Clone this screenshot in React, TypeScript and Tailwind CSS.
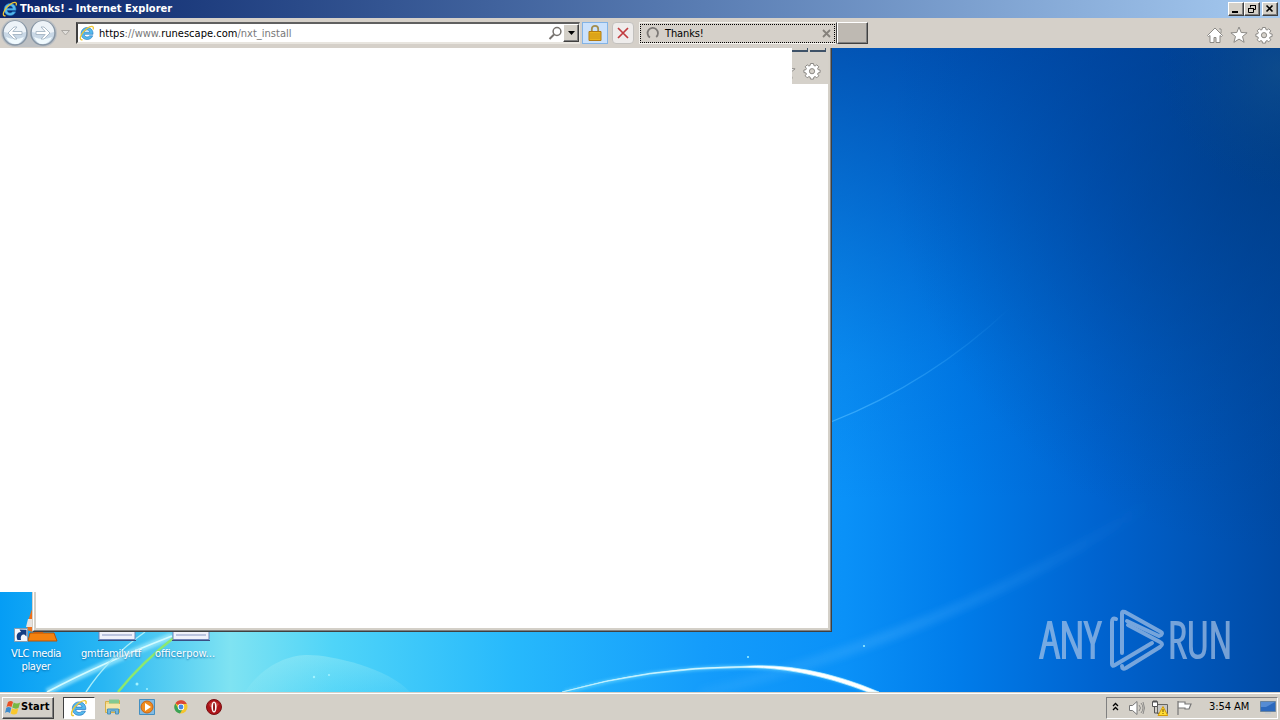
import React from "react";

const ui = "font-['DejaVu_Sans_Condensed','DejaVu_Sans',sans-serif] [font-stretch:condensed]";

function IE({ className = "" }: { className?: string }) {
  return (
    <svg viewBox="0 0 16 16" className={className}>
      <path d="M14 9.300H5.200c.2 1.700 1.300 2.700 2.900 2.700 1.200 0 2-.5 2.400-1.200h3.200c-.8 2.400-2.900 3.700-5.600 3.700-3.500 0-6-2.500-6-5.900s2.500-6 6-6c3.700 0 6.200 2.700 5.900 6.700zM5.300 7.200h5.400c-.2-1.500-1.200-2.300-2.600-2.300S5.600 5.700 5.300 7.200z" fill="#55b9ec" stroke="#1b72c0" strokeWidth=".6" />
      <path d="M3.500 14.600C1.200 15.500.5 13 2.400 9.700 4.700 5.400 10.500 1 13.400 1.500c1.200.4 1.200 1.500.6 2.900" fill="none" stroke="#efc634" strokeWidth="1.300" />
    </svg>
  );
}

function Gear() {
  return (
    <svg viewBox="0 0 18 18" className="size-[18px] shrink-0">
      <g stroke="#8b8985" fill="#fff" strokeWidth="1">
        <path d="M7.500 1.500h3l.4 2 1.200.5 1.700-1.200 2 2-1.200 1.700.5 1.200 2 .3v2.500l-2 .4-.5 1.200 1.200 1.700-2 2-1.700-1.200-1.200.5-.4 2h-3l-.4-2-1.200-.5-1.700 1.200-2-2 1.200-1.700-.5-1.200-2-.4V8l2-.3.500-1.200-1.200-1.700 2-2L5.900 4l1.200-.5z" />
        <circle cx="9" cy="9.200" r="2.600" fill="#d5d1ca" />
      </g>
    </svg>
  );
}

function Star() {
  return (
    <svg viewBox="0 0 18 18" className="size-[18px] shrink-0">
      <path d="M9 1l2.200 5.500 5.900.3-4.600 3.700 1.600 5.800L9 13.100l-5.100 3.200 1.600-5.800L.9 6.800l5.900-.3z" fill="#fff" stroke="#8b8985" />
    </svg>
  );
}

function Wallpaper() {
  return (
    <svg viewBox="0 48 1280 644" preserveAspectRatio="none" className="absolute inset-0 h-full w-full">
      <defs>
        <linearGradient id="sky" x1="0" x2="1280" y1="0" y2="0" gradientUnits="userSpaceOnUse">
          <stop offset="0" stopColor="#059df5" />
          <stop offset=".08" stopColor="#28b6f3" />
          <stop offset=".18" stopColor="#7fe3f2" />
          <stop offset=".26" stopColor="#4fd4f8" />
          <stop offset=".4" stopColor="#27b9fc" />
          <stop offset=".55" stopColor="#149cfb" />
          <stop offset=".66" stopColor="#0a91f8" />
          <stop offset=".75" stopColor="#007cea" />
          <stop offset=".86" stopColor="#0063cf" />
          <stop offset="1" stopColor="#004aa5" />
        </linearGradient>
        <linearGradient id="shade" x1="0" x2="0" y1="48" y2="500" gradientUnits="userSpaceOnUse">
          <stop offset="0" stopColor="#0042a0" stopOpacity=".76" />
          <stop offset=".35" stopColor="#0047a8" stopOpacity=".46" />
          <stop offset=".7" stopColor="#0050b0" stopOpacity=".14" />
          <stop offset="1" stopColor="#0050b0" stopOpacity="0" />
        </linearGradient>
        <radialGradient id="dusk" cx="1290" cy="150" r="400" gradientUnits="userSpaceOnUse">
          <stop offset="0" stopColor="#003a7c" stopOpacity=".7" />
          <stop offset=".5" stopColor="#003c84" stopOpacity=".34" />
          <stop offset="1" stopColor="#00448f" stopOpacity="0" />
        </radialGradient>
        <radialGradient id="corner" cx="1280" cy="70" r="120" gradientUnits="userSpaceOnUse">
          <stop offset="0" stopColor="#1c5787" stopOpacity=".45" />
          <stop offset="1" stopColor="#08488a" stopOpacity="0" />
        </radialGradient>
        <linearGradient id="beam" x1="700" x2="1150" y1="0" y2="0" gradientUnits="userSpaceOnUse">
          <stop offset="0" stopColor="#6cc6ff" stopOpacity=".1" />
          <stop offset=".4" stopColor="#57b6ff" stopOpacity=".27" />
          <stop offset="1" stopColor="#57b6ff" stopOpacity="0" />
        </linearGradient>
        <linearGradient id="thin" x1="832" x2="1010" y1="0" y2="0" gradientUnits="userSpaceOnUse">
          <stop offset="0" stopColor="#46b4ff" stopOpacity=".8" />
          <stop offset="1" stopColor="#46b4ff" stopOpacity="0" />
        </linearGradient>
        <linearGradient id="dome" x1="0" x2="0" y1="655" y2="692" gradientUnits="userSpaceOnUse">
          <stop offset="0" stopColor="#b8f4f5" stopOpacity=".34" />
          <stop offset="1" stopColor="#a0edf5" stopOpacity=".1" />
        </linearGradient>
        <filter id="soft" x="-20%" y="-50%" width="140%" height="200%"><feGaussianBlur stdDeviation="1.600" /></filter>
        <filter id="softer" x="-20%" y="-50%" width="140%" height="200%"><feGaussianBlur stdDeviation="3" /></filter>
      </defs>
      <path d="M0 48h1280v644H0z" fill="url(#sky)" />
      <path d="M0 48h1280v452H0z" fill="url(#shade)" />
      <path d="M880 48h400v510H880z" fill="url(#dusk)" />
      <path d="M1100 48h180v190h-180z" fill="url(#corner)" />
      <path d="M832 421.500Q930 383 1010 308" fill="none" stroke="url(#thin)" strokeWidth="1.200" />
      <path d="M700 694Q960 630 1150 503" fill="none" stroke="url(#beam)" strokeWidth="11" filter="url(#softer)" />
      <path d="M245 692C265 662 292 655 308 655c24 0 80 13 102 37z" fill="url(#dome)" />
      <path d="M47 692Q100 665 172 636" fill="none" stroke="#b9f4ff" strokeWidth="7" opacity=".6" filter="url(#soft)" />
      <path d="M47 692Q100 664 172 636" fill="none" stroke="#d2fbff" strokeWidth="1.800" />
      <path d="M86 692Q108 658 145 632" fill="none" stroke="#a7edfa" strokeWidth="1.500" />
      <path d="M118 692Q142 662 176 636" fill="none" stroke="#8ce86f" strokeWidth="2.500" />
      <path d="M565 692Q650 668 740 667 810 666 872 692" fill="none" stroke="#75dcff" strokeWidth="4" opacity=".55" filter="url(#soft)" />
      <path d="M562 692Q650 668 740 667.500 800 666 868 692l11 0Q806 661 740 666.500 650 667 562 692z" fill="#fff" stroke="#c4f3ff" strokeWidth=".7" />
      <g fill="#a2f2ff"><circle cx="314" cy="677" r="1.200" /><circle cx="329" cy="675" r="1" /><circle cx="748" cy="657" r="1" /><circle cx="864" cy="646" r="1" /><circle cx="137" cy="684" r="1.500" /><circle cx="147" cy="689" r="1" /></g>
    </svg>
  );
}

function Watermark() {
  return (
    <svg viewBox="0 -12 216 90" className="absolute left-[1037px] top-[548px] h-[90px] w-[216px] opacity-65">
      <g fill="#b5cce9" stroke="#b5cce9" strokeWidth="1.900" fontFamily="'Open Sans',sans-serif" fontWeight="300" fontSize="50">
        <text x="3" y="50" textLength="61" lengthAdjust="spacingAndGlyphs">ANY</text>
        <text x="131" y="50" textLength="64" lengthAdjust="spacingAndGlyphs">RUN</text>
      </g>
      <g fill="none" stroke="#b5cce9" strokeWidth="4" strokeLinejoin="round" strokeLinecap="round">
        <path d="M79 11q-4-2-4 3v42q0 3 3 1l37-22" />
        <path d="M85 45V5q0-2 3-1l36 20q2 1 0 3l-2 1-32-15" />
        <path d="M85 58q0 4 4 2l34-21q4-3 0-5L91 17" />
      </g>
    </svg>
  );
}

function WinButton({ children }: { children: React.ReactNode }) {
  return (
    <button className="flex h-[14px] w-4 items-center justify-center border border-t-white border-l-white border-r-[#404040] border-b-[#404040] bg-[#d4d0c8] shadow-[inset_-1px_-1px_0_#808080]">
      <svg viewBox="0 0 12 10" className="h-[10px] w-3" fill="none" stroke="#000">{children}</svg>
    </button>
  );
}

function TitleBar() {
  return (
    <header className="flex h-[18px] shrink-0 items-center bg-linear-to-r from-[#0a246a] to-[#a6caf0] pl-0.5 pr-[2px]">
      <IE className="size-4" />
      <span className="ml-0.5 text-[11px] leading-[18px] font-bold tracking-[0.03px] whitespace-nowrap text-white">Thanks! - Internet Explorer</span>
      <div className="ml-auto flex">
        <WinButton><path d="M2 8h6" strokeWidth="2" /></WinButton>
        <WinButton><path d="M4.500 3.500v-2h5v4h-2M4 1.500h6M2.500 4.500h5v4h-5zM2 4.500h6" /></WinButton>
        <div className="w-0.5" />
        <WinButton><path d="M2.500 1.500l6 6m0-6l-6 6" strokeWidth="1.600" /></WinButton>
      </div>
    </header>
  );
}

function NavButton({ flip = false }: { flip?: boolean }) {
  return (
    <svg viewBox="0 0 28 28" className={flip ? "size-7 -scale-x-100" : "size-7"}>
      <circle cx="14" cy="14" r="12" fill="#c9d8e6" stroke="#8796a5" strokeWidth="1.500" />
      <path d="M3 13a11 11 0 0 1 22 0q-11 3-22 0z" fill="#edf3f8" />
      <path d="M5 18q9 4 18 0-4 8-9 7-6 0-9-7z" fill="#f0fafe" />
      <path d="M13 8L7 14l6 6h3l-4.200-4.500H21v-3h-9.200L16 8z" fill="#fff" stroke="#a4b4c3" strokeWidth=".9" />
    </svg>
  );
}

function ToolBar() {
  return (
    <nav className="flex h-[30px] shrink-0 items-center bg-[#d5d0c9] pl-[1px] pr-[7px]">
      <div className="flex rounded-full bg-[#bdc0c3]"><NavButton /><NavButton flip /></div>
      <svg viewBox="0 0 9 6" className="ml-1 h-1.5 w-[9px]"><path d="M.5.5h8l-4 4.500z" fill="#e1dfdb" stroke="#aaa7a2" /></svg>
      <div className="ml-1.5 flex h-[22px] w-[504px] items-center border-2 border-r border-t-[#606060] border-l-[#404040] border-r-[#e8e5df] border-b-[#e8e5df] bg-white pl-[1px]">
        <IE className="size-4" />
        <span className="ml-1 pt-0.5 text-[11px] tracking-[0.02px] whitespace-nowrap text-[#777]"><span className="text-black">https</span>://www.<span className="text-black">runescape.com</span>/nxt_install</span>
        <svg viewBox="0 0 15 15" className="ml-auto size-[15px]" fill="none" stroke="#77736f" strokeWidth="1.500"><circle cx="10" cy="5.500" r="3.900" /><path d="M7 8.500l-4.500 4.500" strokeWidth="2" /></svg>
        <button className="ml-[1px] flex h-[18px] w-4 items-center justify-center border border-t-white border-l-white border-r-[#404040] border-b-[#404040] bg-[#d4d0c8] shadow-[inset_-1px_-1px_0_#808080]">
          <svg viewBox="0 0 7 4" className="h-1 w-[7px]"><path d="M0 0h7L3.500 4z" /></svg>
        </button>
      </div>
      <button className="ml-0.5 flex h-[22px] w-[26px] items-center justify-center border border-[#83b3e5] bg-[#cbe1fb]">
        <svg viewBox="0 0 16 18" className="h-[18px] w-4"><path d="M4.800 8V5a3.200 3.200 0 0 1 6.400 0v3" fill="none" stroke="#a38d4d" strokeWidth="1.800" /><path d="M2 7.500h12v9H2z" fill="#ebb51c" stroke="#b07a14" /><path d="M2.500 10h11M2.500 12h11M2.500 14h11" stroke="#c68e18" strokeWidth=".8" /></svg>
      </button>
      <button className="ml-1 flex size-[22px] items-center justify-center rounded-sm border border-[#c3c1be] bg-[#eeeceb]">
        <svg viewBox="0 0 12 12" className="size-3"><path d="M1 1l10 10M11 1L1 11" stroke="#c13b3f" strokeWidth="1.700" /></svg>
      </button>
      <div className="ml-[5px] flex h-[22px] w-[198px] items-center border border-[#f4f2ed] border-r-[#404040]">
        <div className="flex h-[19px] w-[195px] items-center border border-dotted border-black pl-[5px] pr-[3px]">
          <svg viewBox="0 0 14 14" className="size-[14px]"><path d="M4 11.500A5.200 5.200 0 1 1 10.200 11" fill="none" stroke="#7c7976" strokeWidth="1.800" /></svg>
          <span className="ml-[5px] pt-0.5 text-[11px] tracking-[-0.12px]">Thanks!</span>
          <svg viewBox="0 0 9 9" className="ml-auto mt-[1px] size-[9px]"><path d="M1 1l7 7m0-7L1 8" stroke="#85817b" strokeWidth="1.800" /></svg>
        </div>
      </div>
      <button className="h-[22px] w-[31px] border border-t-white border-l-white border-r-[#404040] border-b-[#404040] bg-[#beb9b2] shadow-[inset_-1px_-1px_0_#808080]" />
      <div className="ml-auto flex items-center gap-[7px] pt-1">
        <svg viewBox="0 0 18 18" className="-mr-[1px] size-[18px]"><path d="M1.500 9.500L9 2l7.500 7.500-1 1-1.500-1v7h-4v-5H8v5H4v-7l-1.500 1zM13 3h2v4" fill="#fff" stroke="#8b8985" /></svg>
        <Star /><Gear />
      </div>
    </nav>
  );
}

function Document() {
  return <svg viewBox="0 0 38 11" className="ml-[11px] h-[11px] w-[38px]"><path d="M1 0h36v9.500H1z" fill="#eef1fb" stroke="#7184b9" /><path d="M4 5h30" stroke="#8797c4" /><path d="M0 10.500h38" stroke="#394f83" /></svg>;
}

function Desktop() {
  const label = "text-center text-[11px] leading-[13px] text-white [text-shadow:0_1px_2px_#0568a6]";
  return (
    <main className="relative min-h-0 flex-1 overflow-hidden">
      <Wallpaper />
      <div className="absolute left-0 top-[562px] w-[72px]">
        <svg viewBox="0 0 72 34" className="h-[34px] w-[72px]"><path d="M33-4l-2 6-3 9-1 9 8 3h8l4-8z" fill="#ee6f19" /><path d="M28 9h5v8h-7z" fill="#e6e2df" /><path d="M28 31l2-8h24l3 8z" fill="#f5820f" stroke="#b75206" /><path d="M14.500 18.500h13v13h-13z" fill="#f3f7fc" stroke="#8c9eae" /><path d="M17.500 30c-2-5 0-8 3.500-8l-1.500-2.500 7 .2v6.800l-2.200-2c-3 0-4 2-3.300 5.500z" fill="#143e82" /></svg>
        <p className={"mt-[3px] tracking-[-0.35px] " + label}>VLC media<br />player</p>
      </div>
      <div className="absolute left-[76px] top-[582px] flex w-[70px] flex-col items-center"><Document /><p className={"mt-[6px] tracking-[-0.25px] " + label}>gmtfamily.rtf</p></div>
      <div className="absolute left-[150px] top-[582px] flex w-[70px] flex-col items-center"><Document /><p className={"mt-[6px] " + label}>officerpow...</p></div>
      <Watermark />
      <section className="absolute left-[32px] top-0 flex h-[584px] w-[800px] flex-col border-r border-b border-l border-[#404040] border-l-[#d4d0c8] bg-[#d4d0c8]">
        <div className="flex h-full flex-col border-r border-b border-l border-r-[#808080] border-b-[#808080] border-l-white pr-0.5 pb-0.5 pl-[2px]">
          <div className="flex h-9 shrink-0 justify-end overflow-hidden bg-[#d5d1ca]">
            <div className="relative flex items-center pt-2.5 pr-[7px]">
              <div className="absolute right-[2px] top-0 flex gap-0.5"><i className="h-1 w-4 border-r border-b-2 border-[#3e5268] bg-[#d4d0c8]" /><i className="h-1 w-4 border-r border-b-2 border-[#3e5268] bg-[#d4d0c8]" /></div>
              <div className="mr-[7px]"><Star /></div><Gear />
            </div>
          </div>
          <div className="flex-1 bg-white" />
        </div>
      </section>
      <section className="absolute left-0 top-0 h-[544px] w-[792px] bg-white" />
    </main>
  );
}

function TaskBar() {
  return (
    <footer className="flex h-7 shrink-0 items-center border-t border-[#d4d0c8] bg-[#d4d0c8] pl-0.5 shadow-[inset_0_1px_0_#fff]">
      <button className="mt-0.5 flex h-[22px] w-[52px] items-center border border-t-white border-l-white border-r-[#404040] border-b-[#404040] pl-0.5 shadow-[inset_-1px_-1px_0_#808080]">
        <svg viewBox="0 0 16 16" className="size-4"><path d="M3 2q3-2 5 0L6.500 7q-3-1.500-5 0z" fill="#e95124" /><path d="M8.700 2.500q3 2 6.500 0L13.500 8q-3 1.500-6.300-.5z" fill="#78b843" /><path d="M1.300 7.700q2-1.500 5 0L5 13q-3-2-5 0z" fill="#3d8ccd" /><path d="M7 8.200q3 2 6.300 0L12 13.500q-3 2-6.300 0z" fill="#fac82d" /></svg>
        <span className="text-[11px] font-bold tracking-[0.1px]">Start</span>
      </button>
      <div className="ml-[9px] mt-0.5 flex h-[22px] w-8 items-center justify-center border border-t-[#404040] border-l-[#404040] border-r-white border-b-white bg-white"><IE className="size-[18px]" /></div>
      <svg viewBox="0 0 18 18" className="mt-[1px] ml-[9px] size-[18px]"><path d="M1.500 3.500h6l1-1h7v12h-14z" fill="#f3d784" stroke="#d6af49" /><path d="M5 1.500h10v4H5z" fill="#83c991" /><path d="M2 6h14v5H2z" fill="#f6e5a7" /><path d="M3.500 16v-5h11v5h-3v-3h-5v3z" fill="#75b6dc" stroke="#4a91b8" /></svg>
      <svg viewBox="0 0 18 18" className="mt-[1px] ml-4 size-[18px]"><path d="M1.500 1.500h15v15h-15z" fill="#83bbe3" stroke="#438fc1" /><circle cx="9" cy="9" r="6" fill="#ef8b1e" stroke="#ca6412" /><path d="M7 5l6 4-6 4z" fill="#fff" /></svg>
      <svg viewBox="0 0 16 16" className="mt-[1px] ml-[17px] size-4"><circle cx="8" cy="8" r="6.500" fill="#f4c52e" /><path d="M8 8L2.400 4.300A6.500 6.500 0 0 1 13.800 5H8z" fill="#da4637" /><path d="M2.300 4.500A6.500 6.500 0 0 0 7 14.500l3-5-5-.5z" fill="#3aa357" /><circle cx="8" cy="8" r="3.200" fill="#fff" /><circle cx="8" cy="8" r="2.400" fill="#4787e3" /></svg>
      <svg viewBox="0 0 16 16" className="mt-[1px] ml-[17px] size-4"><circle cx="8" cy="8" r="7.500" fill="#ad1419" stroke="#791013" /><path d="M3 5q5-5 10 0l-2 3H4z" fill="#d95750" opacity=".6" /><ellipse cx="8" cy="8" rx="2.600" ry="5.500" fill="#fff" /><ellipse cx="8" cy="8" rx="1" ry="4.300" fill="#8e1719" /></svg>
      <div className="mt-0.5 mr-0.5 ml-auto flex h-[22px] w-[172px] items-center border border-t-[#808080] border-l-[#808080] border-r-white border-b-white pl-[5px]">
        <svg viewBox="0 0 7 10" className="-mt-0.5 h-[10px] w-[7px]" fill="none" stroke="#000" strokeWidth="1.300"><path d="M1 4l2.500-2.500L6 4M1 8l2.500-2.500L6 8" /></svg>
        <svg viewBox="0 0 18 16" className="ml-[9px] h-4 w-[18px]" fill="none" stroke="#777"><path d="M1.500 5.500h3L9 1.500v13l-4.500-4h-3z" fill="#fff" /><path d="M11 5q3 3 0 6M13 3q4 5 0 10M15 2q3 6 0 12" strokeWidth=".8" /></svg>
        <svg viewBox="0 0 16 16" className="ml-1.5 size-4"><path d="M5.500 4.500h10v9h-10z" fill="#c7c7c5" stroke="#646462" /><path d="M2.500 5v8h4" fill="none" stroke="#555" /><path d="M.5 1.500h5v5h-5z" fill="#fff" stroke="#555" /><path d="M2 0v3m2-3v3" stroke="#555" /><path d="M11 6.500L15.800 15.500H6z" fill="#ffdd35" stroke="#d49a08" /><path d="M11 9v3m0 1v1" stroke="#705000" /></svg>
        <svg viewBox="0 0 17 16" className="ml-2 h-4 w-[17px]"><path d="M2 1v14M2.500 2h6.500v2h6l-2 5H9V8H2.500" fill="#fff" stroke="#777" strokeWidth="1.200" /></svg>
        <span className="ml-4 text-[11px] tracking-[-0.05px] whitespace-nowrap">3:54 AM</span>
        <svg viewBox="0 0 16 13" className="ml-auto mr-[1px] h-[13px] w-4"><path d="M.5.500h15v10H.5z" fill="#2c69bd" stroke="#69849f" /><path d="M1 1h14l-9 5H1z" fill="#568cd3" /><path d="M5 11h6v2H5z" fill="#c6cbd0" /></svg>
      </div>
    </footer>
  );
}

export default function App() {
  return (
    <div className={"flex h-screen w-screen flex-col overflow-hidden text-black " + ui}>
      <TitleBar /><ToolBar /><Desktop /><TaskBar />
    </div>
  );
}
